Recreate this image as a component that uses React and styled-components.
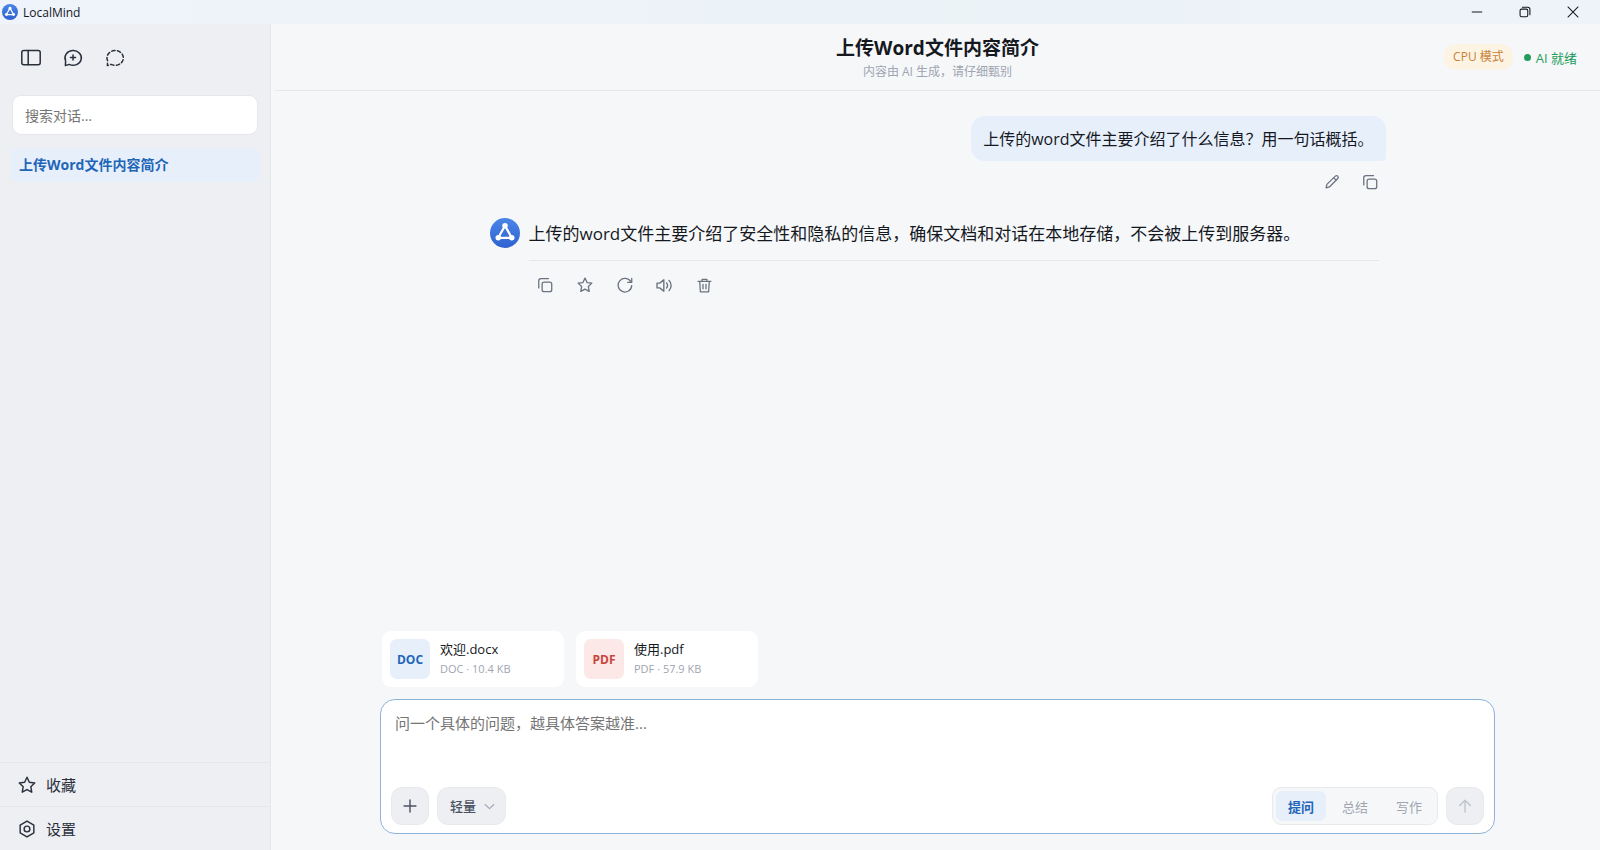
import React, { useState } from "react";
import styled, { createGlobalStyle, css, ThemeProvider } from "styled-components";

const theme = {
  font: `"Open Sans", "Noto Sans CJK SC", sans-serif`,
  colors: {
    text: "#15181e",
    strong: "#2a303b",
    soft: "#6b7280",
    muted: "#a0a5b1",
    accent: "#1f66b8",
    accentSoft: "#e7effb",
    line: "#e5e7eb",
    sidebar: "#edeff3",
    main: "#f5f7f9",
    control: "#edeff3",
    surface: "#ffffff",
    success: "#1f9d5c",
    warning: "#c98236",
    warningSoft: "#fdf3e3",
    danger: "#c7443e",
    dangerSoft: "#fce8e7",
  },
};

const MODES = ["提问", "总结", "写作"];

const FILES = [
  { kind: "DOC", name: "欢迎.docx", size: "10.4 KB" },
  { kind: "PDF", name: "使用.pdf", size: "57.9 KB" },
];

const ICONS = {
  panel: (
    <>
      <rect x="0.8" y="2.4" width="18.4" height="14.4" rx="2" />
      <path d="M7.2 2.4v14.4" />
    </>
  ),
  newChat: (
    <>
      <path d="M2.6 12.8A8.2 7.4 0 1 1 6.2 16.4L2.4 17.6z" />
      <path d="M10 7v5M7.5 9.5h5" />
    </>
  ),
  tempChat: <path strokeDasharray="3.4 2.4" d="M2.6 12.8A8.2 7.4 0 1 1 6.2 16.4L2.4 17.6z" />,
  copy: (
    <>
      <rect x="6.4" y="6.4" width="12" height="12" rx="2.6" />
      <path d="M2.2 13.6V4.8A2.8 2.8 0 0 1 5 2h9.4" />
    </>
  ),
  pencil: (
    <>
      <path d="M2.6 17.4l1-4.4L14.2 2.7a2.1 2.1 0 0 1 3 3L6.8 16.2z" />
      <path d="M12.2 4.8l2.9 2.9" />
    </>
  ),
  star: <path d="M10 1.4l2.6 5.5 6 .8-4.4 4.2 1.1 6.1-5.3-2.9L4.7 18l1.1-6.1-4.4-4.2 6-.8z" />,
  refresh: (
    <>
      <path d="M17.4 6.2A8.5 8.5 0 1 0 18.4 10.8" />
      <path d="M18.4 1.8v5h-5" />
    </>
  ),
  volume: (
    <>
      <path d="M1.2 7.2h3.2l4.8-4v13.6l-4.8-4H1.2z" />
      <path d="M12.4 7a4.2 4.2 0 0 1 0 6M15.4 4.2a8.2 8.2 0 0 1 0 11.6" />
    </>
  ),
  trash: (
    <path d="M1.4 4.4h17.2M6.8 4.2V1.8h6.4v2.4M3.6 4.6l.9 13.8h11l.9-13.8M8 8.4v6M12 8.4v6" />
  ),
  hexagon: (
    <>
      <path d="M10 1.2l7.6 4.4v8.8L10 18.8l-7.6-4.4V5.6z" />
      <circle cx="10" cy="10" r="3.2" />
    </>
  ),
  plus: <path d="M10 2.6v14.8M2.6 10h14.8" />,
  chevron: <path d="M2 6.4l8 7.4 8-7.4" />,
  arrowUp: <path d="M10 17.6V3M3.4 9.4L10 2.8l6.6 6.6" />,
  minimize: <path d="M2 10h16" />,
  restore: (
    <>
      <rect x="1.8" y="5.2" width="12.8" height="12.8" rx="2.4" />
      <path d="M5.6 2.2h9.2a3.4 3.4 0 0 1 3.4 3.4v9" />
    </>
  ),
  close: <path d="M1.6 1.6l16.8 16.8M18.4 1.6L1.6 18.4" />,
};

const Icon = ({ name, size = 16, stroke = 1.6 }) => (
  <Glyph $size={size} $stroke={stroke} viewBox="0 0 20 20" aria-hidden="true">
    {ICONS[name]}
  </Glyph>
);

const Logo = ({ size, id }) => (
  <svg width={size} height={size} viewBox="0 0 24 24" aria-hidden="true">
    <defs>
      <linearGradient id={id} x1="0" y1="0" x2="0" y2="1">
        <stop offset="0" stopColor="#4a86e8" />
        <stop offset="1" stopColor="#2f62cf" />
      </linearGradient>
    </defs>
    <circle cx="12" cy="12" r="12" fill={`url(#${id})`} />
    <path d="M12 6.2l-5.4 9.6h10.8z" fill="none" stroke="#fff" strokeWidth="1.8" strokeLinejoin="round" />
    <circle cx="12" cy="6.2" r="2.2" fill="#fff" />
    <circle cx="6.6" cy="15.8" r="2.2" fill="#fff" />
    <circle cx="17.4" cy="15.8" r="2.2" fill="#fff" />
  </svg>
);

const TitleBar = () => (
  <Bar>
    <Logo size={16} id="bar-logo" />
    <AppName>LocalMind</AppName>
    <WindowButton aria-label="最小化">
      <Icon name="minimize" size={12} stroke={1.8} />
    </WindowButton>
    <WindowButton aria-label="还原">
      <Icon name="restore" size={12} stroke={1.8} />
    </WindowButton>
    <WindowButton aria-label="关闭">
      <Icon name="close" size={12} stroke={1.7} />
    </WindowButton>
  </Bar>
);

const Sidebar = () => (
  <Side>
    <SideTools>
      <ToolButton aria-label="折叠侧栏">
        <Icon name="panel" size={20} stroke={1.5} />
      </ToolButton>
      <ToolButton aria-label="新建对话">
        <Icon name="newChat" size={20} stroke={1.5} />
      </ToolButton>
      <ToolButton aria-label="临时对话">
        <Icon name="tempChat" size={20} stroke={1.5} />
      </ToolButton>
    </SideTools>
    <Search type="search" placeholder="搜索对话..." aria-label="搜索对话" />
    <History>
      <HistoryLink href="#chat">上传Word文件内容简介</HistoryLink>
    </History>
    <SideLink href="#favorites">
      <Icon name="star" size={18} />
      收藏
    </SideLink>
    <SideLink href="#settings">
      <Icon name="hexagon" size={18} />
      设置
    </SideLink>
  </Side>
);

const Composer = () => {
  const [mode, setMode] = useState(MODES[0]);
  const [text, setText] = useState("");

  return (
    <Box>
      <Prompt
        aria-label="问题"
        placeholder="问一个具体的问题，越具体答案越准..."
        value={text}
        onChange={(e) => setText(e.target.value)}
      />
      <Controls>
        <SquareButton aria-label="添加文件">
          <Icon name="plus" size={16} stroke={1.8} />
        </SquareButton>
        <SelectWrap>
          <ModelSelect aria-label="模型">
            <option>轻量</option>
          </ModelSelect>
          <Icon name="chevron" size={11} stroke={2} />
        </SelectWrap>
        <Segment role="group" aria-label="模式">
          {MODES.map((m) => (
            <SegmentButton key={m} $active={m === mode} aria-pressed={m === mode} onClick={() => setMode(m)}>
              {m}
            </SegmentButton>
          ))}
        </Segment>
        <SquareButton $muted aria-label="发送">
          <Icon name="arrowUp" size={16} stroke={1.7} />
        </SquareButton>
      </Controls>
    </Box>
  );
};

export default function App() {
  return (
    <ThemeProvider theme={theme}>
      <GlobalStyle />
      <Page>
        <TitleBar />
        <Body>
          <Sidebar />
          <Main>
            <Header>
              <Heading>
                <Title>上传Word文件内容简介</Title>
                <Subtitle>内容由 AI 生成，请仔细甄别</Subtitle>
              </Heading>
              <Status>
                <Pill>CPU 模式</Pill>
                <Ready>AI 就绪</Ready>
              </Status>
            </Header>

            <Thread>
              <Question>上传的word文件主要介绍了什么信息？用一句话概括。</Question>
              <Actions $end>
                <ActionButton aria-label="编辑">
                  <Icon name="pencil" />
                </ActionButton>
                <ActionButton aria-label="复制问题">
                  <Icon name="copy" />
                </ActionButton>
              </Actions>
              <Reply>
                <Logo size={30} id="reply-logo" />
                <ReplyBody>
                  <Answer>
                    上传的word文件主要介绍了安全性和隐私的信息，确保文档和对话在本地存储，不会被上传到服务器。
                  </Answer>
                  <Actions>
                    <ActionButton aria-label="复制">
                      <Icon name="copy" />
                    </ActionButton>
                    <ActionButton aria-label="收藏">
                      <Icon name="star" />
                    </ActionButton>
                    <ActionButton aria-label="重新生成">
                      <Icon name="refresh" />
                    </ActionButton>
                    <ActionButton aria-label="朗读">
                      <Icon name="volume" size={17} />
                    </ActionButton>
                    <ActionButton aria-label="删除">
                      <Icon name="trash" size={15} stroke={1.7} />
                    </ActionButton>
                  </Actions>
                </ReplyBody>
              </Reply>
            </Thread>

            <Dock>
              <Files>
                {FILES.map(({ kind, name, size }) => (
                  <File key={name}>
                    <Badge $kind={kind}>{kind}</Badge>
                    <FileText>
                      <FileName>{name}</FileName>
                      <FileMeta>
                        {kind} · {size}
                      </FileMeta>
                    </FileText>
                  </File>
                ))}
              </Files>
              <Composer />
            </Dock>
          </Main>
        </Body>
      </Page>
    </ThemeProvider>
  );
}

const GlobalStyle = createGlobalStyle`
  * {
    box-sizing: border-box;
  }

  body {
    margin: 0;
    font-family: ${(p) => p.theme.font};
    color: ${(p) => p.theme.colors.text};
    background: ${(p) => p.theme.colors.main};
  }

  button, input, select, textarea {
    font-family: inherit;
    color: inherit;
    border: 0;
    padding: 0;
    margin: 0;
    background: none;
  }

  button {
    cursor: pointer;
  }
`;

const Glyph = styled.svg`
  width: ${(p) => p.$size}px;
  height: ${(p) => p.$size}px;
  flex: none;
  fill: none;
  stroke: currentColor;
  stroke-width: ${(p) => p.$stroke};
  stroke-linecap: round;
  stroke-linejoin: round;
`;

const Page = styled.div`
  min-height: 100vh;
  display: flex;
  flex-direction: column;
`;

const Bar = styled.header`
  height: 24px;
  padding: 0 3px 0 2px;
  display: flex;
  align-items: center;
  background: linear-gradient(90deg, #eff3fb, #ebf3f7 60%, #eef3fa);
`;

const AppName = styled.span`
  margin-left: 5px;
  margin-right: auto;
  font-size: 12px;
`;

const WindowButton = styled.button`
  width: 48px;
  height: 24px;
  display: grid;
  place-items: center;
`;

const Body = styled.div`
  flex: 1;
  display: flex;
`;

const Side = styled.aside`
  width: 271px;
  flex: none;
  display: flex;
  flex-direction: column;
  background: ${(p) => p.theme.colors.sidebar};
  border-right: 1px solid ${(p) => p.theme.colors.line};
`;

const SideTools = styled.div`
  display: flex;
  gap: 10px;
  padding: 18px 15px 21px;
`;

const ToolButton = styled.button`
  width: 32px;
  height: 32px;
  display: grid;
  place-items: center;
  color: ${(p) => p.theme.colors.strong};
`;

const Search = styled.input`
  height: 40px;
  margin: 0 12px;
  padding: 0 12px;
  border: 1px solid ${(p) => p.theme.colors.line};
  border-radius: 9px;
  background: ${(p) => p.theme.colors.surface};
  font-size: 14px;

  &::placeholder {
    color: #757575;
  }
`;

const History = styled.nav`
  flex: 1;
  padding: 13px 10px;
`;

const HistoryLink = styled.a`
  display: block;
  padding: 0 9px;
  border-radius: 8px;
  background: ${(p) => p.theme.colors.accentSoft};
  color: ${(p) => p.theme.colors.accent};
  font-size: 14px;
  font-weight: 700;
  line-height: 34px;
  text-decoration: none;
`;

const SideLink = styled.a`
  height: 44px;
  padding: 0 18px;
  display: flex;
  align-items: center;
  gap: 10px;
  border-top: 1px solid ${(p) => p.theme.colors.line};
  color: ${(p) => p.theme.colors.strong};
  font-size: 15px;
  text-decoration: none;
`;

const Main = styled.main`
  flex: 1;
  min-width: 0;
  margin-left: 4px;
  display: flex;
  flex-direction: column;
`;

const Header = styled.div`
  height: 67px;
  padding: 0 23px;
  display: grid;
  grid-template-columns: 1fr auto 1fr;
  align-items: center;
  border-bottom: 1px solid ${(p) => p.theme.colors.line};
`;

const Heading = styled.div`
  grid-column: 2;
  padding-top: 2px;
  text-align: center;
`;

const Title = styled.h1`
  margin: 0;
  font-size: 19px;
  font-weight: 700;
  line-height: 28px;
`;

const Subtitle = styled.p`
  margin: 0;
  color: ${(p) => p.theme.colors.muted};
  font-size: 12px;
  line-height: 20px;
`;

const Status = styled.div`
  justify-self: end;
  display: flex;
  align-items: center;
  gap: 11px;
  font-size: 12px;
`;

const Pill = styled.span`
  padding: 0 9px;
  border-radius: 12px;
  background: ${(p) => p.theme.colors.warningSoft};
  color: ${(p) => p.theme.colors.warning};
  line-height: 26px;
`;

const Ready = styled.span`
  display: flex;
  align-items: center;
  gap: 5px;
  color: ${(p) => p.theme.colors.success};
  font-size: 13px;

  &:before {
    content: "";
    width: 7px;
    height: 7px;
    border-radius: 50%;
    background: currentColor;
  }
`;

const Thread = styled.section`
  flex: 1;
  width: 100%;
  max-width: 896px;
  margin: 0 auto;
  padding: 25px 0;
  display: flex;
  flex-direction: column;
`;

const Question = styled.p`
  align-self: flex-end;
  margin: 0;
  padding: 11px 12px 10px;
  border-radius: 14px 14px 4px 14px;
  background: ${(p) => p.theme.colors.accentSoft};
  font-size: 16px;
  line-height: 24px;
`;

const Actions = styled.div`
  display: flex;
  gap: 8px;
  padding-top: 8px;

  ${(p) =>
    p.$end &&
    css`
      justify-content: flex-end;
      gap: 6px;
      padding-top: 5px;
    `}
`;

const ActionButton = styled.button`
  width: 32px;
  height: 32px;
  display: grid;
  place-items: center;
  color: ${(p) => p.theme.colors.soft};
`;

const Reply = styled.article`
  display: flex;
  align-items: flex-start;
  gap: 9px;
  padding-top: 20px;
`;

const ReplyBody = styled.div`
  flex: 1;
  margin-right: 7px;
`;

const Answer = styled.p`
  margin: 0;
  padding: 1px 0 11px;
  border-bottom: 1px solid ${(p) => p.theme.colors.line};
  font-size: 17px;
  line-height: 30px;
`;

const Dock = styled.section`
  width: calc(100% - 32px);
  max-width: 1115px;
  margin: 0 auto;
  padding-bottom: 16px;
`;

const Files = styled.div`
  display: flex;
  gap: 12px;
  padding: 0 2px 12px;
`;

const File = styled.div`
  width: 182px;
  padding: 8px;
  display: flex;
  align-items: center;
  gap: 10px;
  border-radius: 9px;
  background: ${(p) => p.theme.colors.surface};
`;

const Badge = styled.span`
  width: 40px;
  height: 40px;
  display: grid;
  place-items: center;
  border-radius: 7px;
  background: ${(p) => (p.$kind === "PDF" ? p.theme.colors.dangerSoft : p.theme.colors.accentSoft)};
  color: ${(p) => (p.$kind === "PDF" ? p.theme.colors.danger : p.theme.colors.accent)};
  font-size: 12px;
  font-weight: 700;
`;

const FileText = styled.div`
  display: flex;
  flex-direction: column;
  line-height: 20px;
`;

const FileName = styled.span`
  font-size: 13px;
`;

const FileMeta = styled.span`
  color: ${(p) => p.theme.colors.muted};
  font-size: 11px;
`;

const Box = styled.form.attrs({ onSubmit: (e) => e.preventDefault() })`
  padding: 10px 10px 8px;
  display: flex;
  flex-direction: column;
  border: 1px solid #8db3dc;
  border-radius: 15px;
  background: ${(p) => p.theme.colors.surface};
`;

const Prompt = styled.textarea`
  height: 77px;
  padding: 1px 4px;
  resize: none;
  outline: none;
  font-size: 15px;
  line-height: 24px;

  &::placeholder {
    color: #757575;
  }
`;

const Controls = styled.div`
  display: flex;
  align-items: center;
  gap: 8px;
`;

const SquareButton = styled.button.attrs({ type: "button" })`
  width: 38px;
  height: 38px;
  display: grid;
  place-items: center;
  border: 1px solid #e8eaee;
  border-radius: 11px;
  background: ${(p) => p.theme.colors.control};
  color: ${(p) => (p.$muted ? "#bfc3cc" : "#4b5262")};
`;

const SelectWrap = styled.span`
  display: grid;
  align-items: center;
  color: ${(p) => p.theme.colors.muted};

  > * {
    grid-area: 1 / 1;
  }

  svg {
    justify-self: end;
    margin-right: 11px;
    pointer-events: none;
  }
`;

const ModelSelect = styled.select`
  appearance: none;
  height: 38px;
  padding: 0 28px 0 12px;
  border: 1px solid #e8eaee;
  border-radius: 11px;
  background: ${(p) => p.theme.colors.control};
  color: #4b5262;
  font-size: 13px;
  font-weight: 500;
`;

const Segment = styled.div`
  margin-left: auto;
  height: 38px;
  padding: 3px;
  display: flex;
  gap: 4px;
  border: 1px solid #e8eaee;
  border-radius: 9px;
  background: ${(p) => p.theme.colors.main};
`;

const SegmentButton = styled.button.attrs({ type: "button" })`
  padding: 0 12px;
  border-radius: 7px;
  color: ${(p) => p.theme.colors.muted};
  font-size: 13px;

  ${(p) =>
    p.$active &&
    css`
      background: ${p.theme.colors.accentSoft};
      color: ${p.theme.colors.accent};
      font-weight: 700;
    `}
`;
